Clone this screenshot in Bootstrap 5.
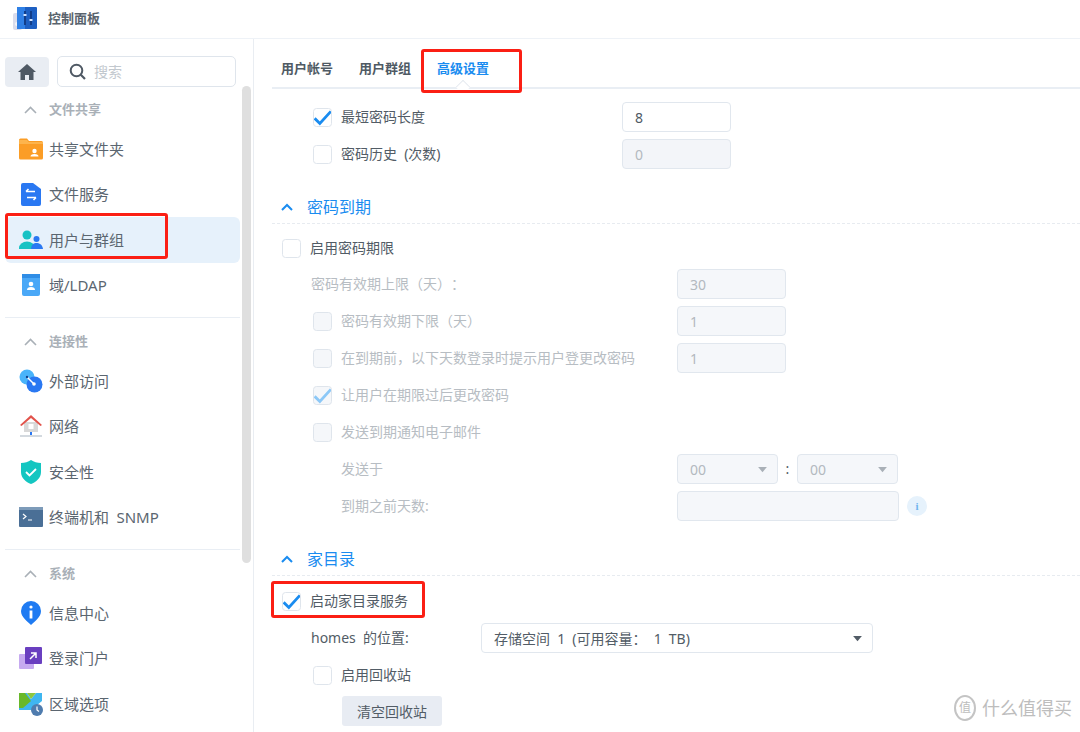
<!DOCTYPE html>
<html lang="zh-CN">
<head>
<meta charset="utf-8">
<title>控制面板</title>
<link rel="stylesheet" href="https://cdn.jsdelivr.net/npm/bootstrap@5.3.0/dist/css/bootstrap.min.css">
<style>
html,body{height:732px;overflow:hidden}
body{font-family:"Noto Sans","Noto Sans CJK SC",sans-serif;font-size:14px;color:#525c66;background:#fff;position:relative;word-spacing:3.5px;text-spacing-trim:space-all}
.top-bar{height:39px;border-bottom:1px solid #eef2f7;padding-left:13px;gap:11px}
.top-bar b{font-size:13px;font-weight:700;color:#5a646e}
.shell{height:693px}
.side-pane{width:254px;border-right:1px solid #e9edf2;position:relative;flex:none;padding:17px 0 0 5px}
.side-inner{width:235px}
.home-row{margin-bottom:12px}
.home-btn{width:44px;height:30px;background:#e9edf3;border-radius:4px}
.find-box{width:179px;height:31px;border:1px solid #dfe5ec;border-radius:5px;margin-left:8px;padding-left:11px;gap:8px;color:#c2c8ce;font-size:14px}
.sec-head{height:21px;padding-left:19px;gap:12px;font-size:13px;font-weight:700;color:#a9b0b7}
.side-list{margin-top:6px}
.side-row{height:45.5px;padding-left:14px;gap:6px;font-size:15px;color:#5b6670;border-radius:6px}
.side-row svg{flex:none}
.side-row.on{background:#e6f1fb}
.side-rule{border-top:1px solid #e9eef4;margin-top:9px;margin-bottom:13px}
.rail{position:absolute;left:242px;top:47px;width:9px;height:477px;background:#dfdfdf;border-radius:5px}
.main-pane{padding:0 0 0 18px;overflow:hidden}
.tab-bar{height:50px;border-bottom:2px solid #e9eef4;font-size:13px;font-weight:700;color:#4f5a64;position:relative}
.tab-item{padding:19px 0 0 0;line-height:20px;margin-left:26px}
.tab-item:first-child{margin-left:9px}
.tab-on{color:#1a8cf0}
.tab-tip{position:absolute;left:185px;top:42px;width:12px;height:12px;background:#fff;border-left:1px solid #e3e8ee;border-top:1px solid #e3e8ee;transform:rotate(45deg) scale(.85)}
.f-row{height:30px;margin-bottom:7px;line-height:30px}
.f-first{margin-top:13px}
.ind-2{padding-left:10px}
.ind-3{padding-left:41px}
.ind-lab{padding-left:39px}
.ind-4{padding-left:69px}
input.tick{width:19px;height:19px;margin:0 9px 0 0;border:1px solid #dfe5ec;border-radius:4px;background-color:#fff;flex:none;opacity:1!important}
input.tick:checked{background-color:#fff;border-color:#dfe5ec;background-size:18px;background-image:url("data:image/svg+xml,%3Csvg xmlns='http://www.w3.org/2000/svg' viewBox='0 0 16 16'%3E%3Cpath d='M1 8.500l4.500 4.500L15 2.500' fill='none' stroke='%231a8cf0' stroke-width='2.400'/%3E%3C/svg%3E")}
.fade-row{color:#b7bdc3}
.fade-row input.tick{background-color:#f5f7fa}
.fade-row input.tick:checked{background-color:#f5f7fa;background-image:url("data:image/svg+xml,%3Csvg xmlns='http://www.w3.org/2000/svg' viewBox='0 0 16 16'%3E%3Cpath d='M1 8.500l4.500 4.500L15 2.500' fill='none' stroke='%238cc8f7' stroke-width='2.400'/%3E%3C/svg%3E")}
input.num-box{width:109px;height:30px;padding:0 12px;border:1px solid #e1e7ee;border-radius:4px;font-size:14px;color:#4f5a64;flex:none;background:#fff}
input.num-box:disabled{background:#f3f5f9;color:#b3b9bf;opacity:1}
.fade-row input.num-box{background:#f5f7fa}
select.pick{height:30px;padding:0 12px;border:1px solid #e1e7ee;border-radius:4px;font-size:14px;word-spacing:3.5px;background-color:#f5f7fa;color:#b3b9bf;background-size:11px 7px;background-position:right 9px center;background-image:url("data:image/svg+xml,%3Csvg xmlns='http://www.w3.org/2000/svg' viewBox='0 0 12 8'%3E%3Cpath d='M1 1h10L6 7z' fill='%23a9b0b7'/%3E%3C/svg%3E");opacity:1;flex:none}
select.pick:disabled{background-color:#f5f7fa;color:#b3b9bf}
select.pick-time{width:101px}
select.pick-wide{width:392px;background-color:#fff;color:#525c66;background-image:url("data:image/svg+xml,%3Csvg xmlns='http://www.w3.org/2000/svg' viewBox='0 0 12 8'%3E%3Cpath d='M1 1h10L6 7z' fill='%23525c66'/%3E%3C/svg%3E")}
.col-lab-a{width:281px;flex:none}
.col-lab-b{width:336px;flex:none}
.col-lab-u{width:366px;flex:none}
.col-lab-h{width:170px;flex:none}
.time-sep{width:19px;text-align:center;color:#525c66}
.fold-head{height:34px;border-bottom:1px dashed #e7ebf0;padding-left:9px;gap:14px;font-size:16px;color:#1a8cf0;margin-top:21px}
.fold-short{height:33px;margin-top:22px}
.row-gap-a{margin-top:9px;margin-bottom:6px}
.row-gap-b{margin-top:10px}
.wipe-btn{width:100px;height:30px;padding:0;border:0;border-radius:3px;background:#e8ecf3;color:#525c66;font-size:14px;margin:-1px 0 0 70px}
.tip-dot{width:20px;height:20px;border-radius:50%;background:#e6f2fc;color:#6fb4ee;font-size:11px;font-weight:700;font-family:"Liberation Serif",serif;margin-left:8px;line-height:20px;text-align:center}
.red-box{position:absolute;border:3px solid #fb1f14;border-radius:3px;pointer-events:none}
.box-a{left:5px;top:213px;width:163px;height:46px}
.box-b{left:421px;top:49px;width:101px;height:44px}
.box-c{left:271px;top:581px;width:154px;height:37px}
.wm{position:absolute;left:954px;top:695px;gap:6px;color:#bdbdbd;font-size:18px;line-height:26px}
.wm-coin{width:22px;height:26px;border:2px solid #c4c4c4;border-radius:50%;font-size:12px;line-height:22px;text-align:center}
.wide-336{width:336px;flex:none}
.wide-222{width:222px!important}
</style>
</head>
<body>
<div class="top-bar d-flex align-items-center">
<svg width="24" height="24" viewBox="0 0 24 24"><rect x="0" y="6" width="9" height="17" rx="2" fill="#d9dcec"/><circle cx="4" cy="17" r="2" fill="#f4f5fa"/><rect x="4" y="0" width="20" height="22" rx="1" fill="#1d5fc2"/><rect x="4" y="0" width="8" height="22" fill="#2f80e6"/><path d="M12 4v14M18 4v14" stroke="#123e8a" stroke-width="2"/><path d="M10.500 8h3M16.500 13h3" stroke="#cfe3ff" stroke-width="2"/></svg>
<b>控制面板</b>
</div>
<div class="shell d-flex">
<aside class="side-pane">
<div class="side-inner">
<div class="home-row d-flex align-items-center">
<div class="home-btn d-flex align-items-center justify-content-center"><svg width="18" height="16" viewBox="0 0 18 16"><path d="M9 0L0 8h2.500v8h4.500v-5h4v5h4.500V8H18z" fill="#4f5964"/></svg></div>
<div class="find-box d-flex align-items-center"><svg width="17" height="17" viewBox="0 0 17 17"><circle cx="7.500" cy="7.500" r="5.800" fill="none" stroke="#4f5964" stroke-width="2"/><path d="M11.800 11.800L16 16" stroke="#4f5964" stroke-width="2.200"/></svg><span>搜索</span></div>
</div>
<div class="sec-head d-flex align-items-center"><svg width="13" height="8" viewBox="0 0 13 8"><path d="M1 7l5.500-5.500L12 7" fill="none" stroke="#a9b0b7" stroke-width="1.600"/></svg><span>文件共享</span></div>
<div class="side-list">
<div class="side-row d-flex align-items-center"><svg width="24" height="22" viewBox="0 0 24 22"><path d="M0 2a1.500 1.500 0 0 1 1.500-1.500H8L10 3h12.500A1.500 1.500 0 0 1 24 4.500V20a1.500 1.500 0 0 1-1.500 1.500h-21A1.500 1.500 0 0 1 0 20z" fill="#fb9d26"/><path d="M0 6h24V4H9.500L8 2H0z" fill="#fdb44c"/><circle cx="15.500" cy="13" r="2.200" fill="#fff"/><path d="M11.500 18.500a4 2.500 0 0 1 8 0z" fill="#fff"/></svg><span>共享文件夹</span></div>
<div class="side-row d-flex align-items-center"><svg width="24" height="24" viewBox="0 0 24 24"><path d="M2 3a2 2 0 0 1 2-2h10l8 6v15a2 2 0 0 1-2 2H4a2 2 0 0 1-2-2z" fill="#2a78f2"/><path d="M7 9.500h9M7 9.500l2.500-2.500M17 15.500H8M17 15.500l-2.500 2.500" fill="none" stroke="#fff" stroke-width="1.600"/></svg><span>文件服务</span></div>
<div class="side-row on d-flex align-items-center"><svg width="24" height="22" viewBox="0 0 24 22"><circle cx="8" cy="6" r="4.500" fill="#17c2c4"/><path d="M0 19a8 6.500 0 0 1 16 0v1H0z" fill="#17c2c4"/><circle cx="17.500" cy="10" r="3" fill="#2a78f2"/><path d="M12 20c.5-5 3-6 5.500-6s6 1.500 6.500 6z" fill="#2a78f2"/></svg><span>用户与群组</span></div>
<div class="side-row d-flex align-items-center"><svg width="24" height="24" viewBox="0 0 24 24"><rect x="3" y="1" width="18" height="22" rx="2" fill="#4aa8f7"/><rect x="3" y="1" width="18" height="4" fill="#2f8de6"/><circle cx="12" cy="11" r="2.300" fill="#fff"/><path d="M8 17a4 3 0 0 1 8 0z" fill="#fff"/></svg><span>域/LDAP</span></div>
</div>
<div class="side-rule"></div>
<div class="sec-head d-flex align-items-center"><svg width="13" height="8" viewBox="0 0 13 8"><path d="M1 7l5.500-5.500L12 7" fill="none" stroke="#a9b0b7" stroke-width="1.600"/></svg><span>连接性</span></div>
<div class="side-list">
<div class="side-row d-flex align-items-center"><svg width="24" height="24" viewBox="0 0 24 24"><circle cx="8" cy="8" r="7.500" fill="#4ab4fa"/><circle cx="15.500" cy="15.500" r="8" fill="#2a78f2"/><path d="M8 8l7 7" stroke="#fff" stroke-width="1.500"/><circle cx="15" cy="15" r="1.800" fill="#fff"/><circle cx="8" cy="8" r="1.200" fill="#123e8a"/></svg><span>外部访问</span></div>
<div class="side-row d-flex align-items-center"><svg width="24" height="24" viewBox="0 0 24 24"><path d="M5 8h14v10H5z" fill="#d8d8d8"/><path d="M1 11L12 1l11 10-1.500 1L12 4 2.500 12z" fill="#e2534b"/><rect x="9.500" y="10" width="5" height="5" fill="#fff"/><path d="M12 18v3" stroke="#2a78f2" stroke-width="2"/><path d="M1 22h22" stroke="#c5ccd4" stroke-width="1.500"/></svg><span>网络</span></div>
<div class="side-row d-flex align-items-center"><svg width="24" height="24" viewBox="0 0 24 24"><path d="M12 0c3 2 6 3 10 3v9c0 6-5 10-10 12C7 22 2 18 2 12V3c4 0 7-1 10-3z" fill="#14c6c1"/><path d="M7 12l3.500 3.500L17 9" fill="none" stroke="#fff" stroke-width="1.800"/></svg><span>安全性</span></div>
<div class="side-row d-flex align-items-center"><svg width="24" height="20" viewBox="0 0 24 20"><rect width="24" height="20" rx="1" fill="#4a6f96"/><rect width="24" height="3" fill="#7d9bb9"/><path d="M4 7l3 2.500L4 12M9 13h4" fill="none" stroke="#fff" stroke-width="1.200"/></svg><span>终端机和 SNMP</span></div>
</div>
<div class="side-rule"></div>
<div class="sec-head d-flex align-items-center"><svg width="13" height="8" viewBox="0 0 13 8"><path d="M1 7l5.500-5.500L12 7" fill="none" stroke="#a9b0b7" stroke-width="1.600"/></svg><span>系统</span></div>
<div class="side-list">
<div class="side-row d-flex align-items-center"><svg width="24" height="24" viewBox="0 0 24 24"><path d="M12 0a10 10 0 0 1 10 10c0 6-6 10-10 14C8 20 2 16 2 10A10 10 0 0 1 12 0z" fill="#1f7bf2"/><circle cx="12" cy="6" r="1.600" fill="#fff"/><rect x="10.600" y="9.500" width="2.800" height="8" fill="#fff"/></svg><span>信息中心</span></div>
<div class="side-row d-flex align-items-center"><svg width="24" height="24" viewBox="0 0 24 24"><rect x="0" y="8" width="15" height="15" rx="1" fill="#c6aaf0"/><rect x="6" y="1" width="17" height="17" rx="1" fill="#6a3fc0"/><path d="M11 13l6-6M12 7h5v5" fill="none" stroke="#fff" stroke-width="1.500"/></svg><span>登录门户</span></div>
<div class="side-row d-flex align-items-center"><svg width="24" height="24" viewBox="0 0 24 24"><path d="M0 1h8l4 6 5-6h6v8L12 18H0z" fill="#3fb6f0"/><path d="M0 1h6l6 8L4 16H0z" fill="#69b82a"/><path d="M8 1h9l-5 6z" fill="#8cc63f"/><circle cx="18" cy="18" r="6" fill="#4f7cae"/><path d="M18 14.500V18l2 1.500" fill="none" stroke="#fff" stroke-width="1.200"/></svg><span>区域选项</span></div>
</div>
</div>
<div class="rail"></div>
</aside>
<main class="main-pane flex-grow-1">
<div class="tab-bar d-flex">
<div class="tab-item">用户帐号</div>
<div class="tab-item">用户群组</div>
<div class="tab-item tab-on">高级设置</div>
<div class="tab-tip"></div>
</div>
<div class="f-row f-first ind-3 d-flex align-items-center"><input class="form-check-input tick" type="checkbox" checked><span class="col-lab-a">最短密码长度</span><input class="form-control num-box" value="8"></div>
<div class="f-row ind-3 d-flex align-items-center"><input class="form-check-input tick" type="checkbox"><span class="col-lab-a">密码历史 (次数)</span><input class="form-control num-box" value="0" disabled></div>
<div class="fold-head d-flex align-items-center"><svg width="12" height="8" viewBox="0 0 12 8"><path d="M1 7l5-5 5 5" fill="none" stroke="#1a8cf0" stroke-width="2"/></svg><span>密码到期</span></div>
<div class="f-row row-gap-a ind-2 d-flex align-items-center"><input class="form-check-input tick" type="checkbox"><span>启用密码期限</span></div>
<div class="fade-row f-row ind-lab d-flex align-items-center"><span class="col-lab-u">密码有效期上限（天）：</span><input class="form-control num-box" value="30" disabled></div>
<div class="fade-row f-row ind-3 d-flex align-items-center"><input class="form-check-input tick" type="checkbox" disabled><span class="wide-336">密码有效期下限（天）</span><input class="form-control num-box" value="1" disabled></div>
<div class="fade-row f-row ind-3 d-flex align-items-center"><input class="form-check-input tick" type="checkbox" disabled><span class="wide-336">在到期前，以下天数登录时提示用户登更改密码</span><input class="form-control num-box" value="1" disabled></div>
<div class="fade-row f-row ind-3 d-flex align-items-center"><input class="form-check-input tick" type="checkbox" checked disabled><span>让用户在期限过后更改密码</span></div>
<div class="fade-row f-row ind-3 d-flex align-items-center"><input class="form-check-input tick" type="checkbox" disabled><span>发送到期通知电子邮件</span></div>
<div class="fade-row f-row ind-4 d-flex align-items-center"><span class="col-lab-b">发送于</span><select class="form-select pick pick-time" disabled><option>00</option></select><span class="time-sep">:</span><select class="form-select pick pick-time" disabled><option>00</option></select></div>
<div class="fade-row f-row ind-4 d-flex align-items-center"><span class="col-lab-b">到期之前天数:</span><input class="form-control num-box wide-222" disabled><span class="tip-dot">i</span></div>
<div class="fold-head fold-short d-flex align-items-center"><svg width="12" height="8" viewBox="0 0 12 8"><path d="M1 7l5-5 5 5" fill="none" stroke="#1a8cf0" stroke-width="2"/></svg><span>家目录</span></div>
<div class="f-row row-gap-b ind-2 d-flex align-items-center"><input class="form-check-input tick" type="checkbox" checked><span>启动家目录服务</span></div>
<div class="f-row ind-lab d-flex align-items-center"><span class="col-lab-h">homes 的位置:</span><select class="form-select pick pick-wide"><option>存储空间 1 (可用容量：&nbsp;1 TB)</option></select></div>
<div class="f-row ind-3 d-flex align-items-center"><input class="form-check-input tick" type="checkbox"><span>启用回收站</span></div>
<button class="btn wipe-btn" type="button">清空回收站</button>
</main>
</div>
<div class="red-box box-a"></div>
<div class="red-box box-b"></div>
<div class="red-box box-c"></div>
<div class="wm d-flex align-items-center"><span class="wm-coin">值</span><span>什么值得买</span></div>
</body>
</html>
